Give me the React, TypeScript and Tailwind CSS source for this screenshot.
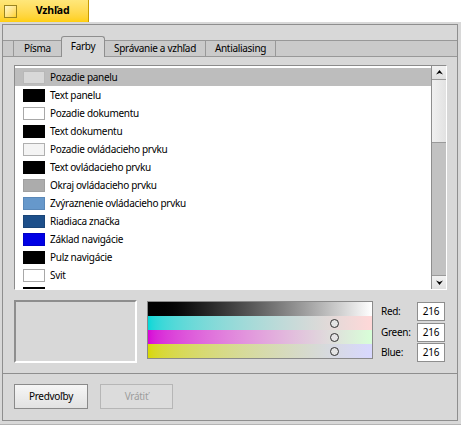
import React from 'react'

// Appearance preferences: colour tab
const colorItems=[
	{ name: 'Pozadie panelu', swatch: 'bg-[#d8d8d8] border-[#b8b8b8]' },
	{ name: 'Text panelu', swatch: 'bg-black border-black' },
	{ name: 'Pozadie dokumentu', swatch: 'bg-white border-[#a8a8a8]' },
	{ name: 'Text dokumentu', swatch: 'bg-black border-black' },
	{ name: 'Pozadie ovládacieho prvku', swatch: 'bg-[#f4f4f4] border-[#b0b0b0]' },
	{ name: 'Text ovládacieho prvku', swatch: 'bg-black border-black' },
	{ name: 'Okraj ovládacieho prvku', swatch: 'bg-[#acacac] border-[#a0a0a0]' },
	{ name: 'Zvýraznenie ovládacieho prvku', swatch: 'bg-[#6698cb] border-[#5a88b8]' },
	{ name: 'Riadiaca značka', swatch: 'bg-[#1d4f8a] border-[#1a4577]' },
	{ name: 'Základ navigácie', swatch: 'bg-[#0000e5] border-[#0000c8]' },
	{ name: 'Pulz navigácie', swatch: 'bg-black border-black' },
	{ name: 'Svit', swatch: 'bg-white border-[#a8a8a8]' },
	{ name: 'Tieň', swatch: 'bg-black border-black' }
]

const tabs=[
	{ label: 'Písma', width: 'w-[48px]' },
	{ label: 'Farby', width: 'w-[44px]', active: true },
	{ label: 'Správanie a vzhľad', width: 'w-[101px]' },
	{ label: 'Antialiasing', width: 'w-[70px]' }
]

const bands=[
	{ cls: 'from-black to-white', knob: false },
	{ cls: 'from-[#00d8d8] to-[#ffd8d8]', knob: true },
	{ cls: 'from-[#d800d8] to-[#d8ffd8]', knob: true },
	{ cls: 'from-[#d8d800] to-[#d8d8ff]', knob: true }
]

function Arrow ( { down }: { down?: boolean } ) {
	return (
		<svg width="7" height="5" viewBox="0 0 7 5" className={down ? 'rotate-180' : ''}>
			<path d="M3.5 0 L7 4.5 L3.5 3 L0 4.5 Z" fill="#000" />
		</svg>
	)
}

export default function App () {
	return (
		<div className="w-[461px] h-[425px] bg-white flex flex-col overflow-hidden text-black text-[10px] tracking-[-0.3px] font-['Noto_Sans','DejaVu_Sans',sans-serif]">
			{/* window tab */}
			<div className="h-[22px] w-[89px] shrink-0 flex items-center border-r border-[#c79b00] bg-gradient-to-b from-[#ffe77a] to-[#ffcf0a]">
				<div className="ml-[4px] w-[13px] h-[13px] border border-[#9a8420] bg-gradient-to-br from-[#fff7c8] to-[#ffd21a]"></div>
				<span className="flex-1 text-center font-bold text-[10.5px] tracking-[-0.2px] pl-[2px] pr-[2px]">Vzhľad</span>
			</div>

			{/* window frame */}
			<div className="h-[403px] bg-[#d8d8d8] pt-[2px] pl-[2px] pr-[3px] pb-[3px] border-b border-[#b4b4b4] flex">
				<div className="flex-1 border border-[#8e8e8e] flex flex-col">
					<div className="h-[11px] shrink-0"></div>

					{/* tab bar */}
					<div className="h-[21px] shrink-0 flex items-end">
						<div className="w-[11px] h-[17px] bg-[#cacaca] border-y border-r border-[#989898]"></div>
						{tabs.map( ( tab ) => (
							tab.active ? (
								<div key={tab.label} className={`${tab.width} h-[21px] bg-[#d8d8d8] border-t border-x border-[#8e8e8e] rounded-t-[3px] flex items-center justify-center pb-[1px] -ml-px`}>
									{tab.label}
								</div>
							) : (
								<div key={tab.label} className={`${tab.width} h-[17px] bg-[#cacaca] border-y border-r border-[#989898] flex items-center justify-center`}>
									{tab.label}
								</div>
							)
						) )}
						<div className="flex-1 h-[17px] bg-[#cacaca] border-y border-[#989898]"></div>
					</div>

					{/* tab panel */}
					<div className="flex-1 flex flex-col pt-[8px] pl-[11px] pr-[10px]">
						{/* colour list */}
						<div className="h-[225px] flex border border-t-[#8c8c8c] border-l-[#8c8c8c] border-b-white border-r-white bg-white">
							<div className="flex-1 pt-[2px] overflow-hidden">
								{colorItems.map( ( item,i ) => (
									<div key={item.name} className={`h-[18px] flex items-center pl-[8px] gap-[5px] ${i===0 ? 'bg-[#bdbdbd]' : ''}`}>
										<div className={`w-[22px] h-[13px] border ${item.swatch}`}></div>
										<span>{item.name}</span>
									</div>
								) )}
							</div>
							<div className="w-[15px] flex flex-col border-l border-[#8e8e8e] bg-[#c2c2c2]">
								<div className="h-[14px] flex items-center justify-center bg-gradient-to-b from-[#f2f2f2] to-[#e0e0e0] border-b border-[#9a9a9a]">
									<Arrow />
								</div>
								<div className="h-[63px] bg-gradient-to-r from-[#f0f0f0] to-[#e2e2e2] border-b border-[#9a9a9a]"></div>
								<div className="flex-1"></div>
								<div className="h-[14px] flex items-center justify-center bg-gradient-to-b from-[#f2f2f2] to-[#e0e0e0] border-t border-[#9a9a9a]">
									<Arrow down />
								</div>
							</div>
						</div>

						{/* colour editor */}
						<div className="mt-[10px] flex">
							<div className="w-[123px] h-[63px] border-2 border-t-[#8e8e8e] border-l-[#8e8e8e] border-b-white border-r-white bg-[#d8d8d8]"></div>
							<div className="ml-[10px] mt-[1px] w-[226px] h-[58px] border border-[#8a8a8a] flex flex-col">
								{bands.map( ( band,i ) => (
									<div key={i} className={`relative h-[14px] bg-gradient-to-r ${band.cls}`}>
										{band.knob&&(
											<div className="absolute left-[182px] top-[2.5px] w-[9px] h-[9px] rounded-full border border-[#303030] bg-[#e4e4e4]"></div>
										)}
									</div>
								) )}
							</div>
							<div className="ml-[8px] mt-[2px] grid grid-cols-[36px_28px] gap-y-[1px]">
								{[ 'Red:','Green:','Blue:' ].map( ( label ) => (
									<React.Fragment key={label}>
										<div className="h-[19px] flex items-center">{label}</div>
										<div className="h-[19px] border border-[#8e8e8e] bg-white flex items-center justify-center">216</div>
									</React.Fragment>
								) )}
							</div>
						</div>
					</div>

					{/* buttons */}
					<div className="h-[47px] shrink-0 border-t border-[#8e8e8e] flex items-start pt-[10px] pl-[11px] gap-[12px]">
						<button className="w-[74px] h-[25px] border border-[#8a8a8a] bg-gradient-to-b from-[#f6f6f6] to-[#e2e2e2] flex items-center justify-center">Predvoľby</button>
						<button className="w-[73px] h-[25px] border border-[#b6b6b6] bg-[#dcdcdc] text-[#9c9c9c] flex items-center justify-center">Vrátiť</button>
					</div>
				</div>
			</div>
		</div>
	)
}
